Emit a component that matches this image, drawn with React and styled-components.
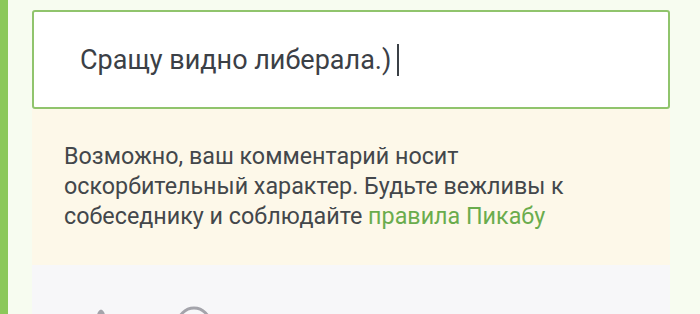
import React from 'react';
import styled, { createGlobalStyle } from 'styled-components';

const GlobalStyle = createGlobalStyle`
  html, body {
    margin: 0;
    padding: 0;
    background: #f7fcf0;
    overflow: hidden;
  }
  body {
    font-family: Roboto, "Noto Sans", sans-serif;
  }
`;

const Page = styled.div`
  display: flex;
  height: 314px;
  overflow: hidden;
  background: #f7fcf0;
`;

const SideBar = styled.div`
  width: 8px;
  flex-shrink: 0;
  background: #8bc85a;
`;

const Panel = styled.div`
  margin: 10px 0 0 24px;
  width: 638px;
  display: flex;
  flex-direction: column;
  & > * {
    flex-shrink: 0;
  }
`;

const Editor = styled.div`
  height: 95px;
  box-sizing: content-box;
  border: 2px solid #90c46c;
  border-radius: 3px;
  background: #ffffff;
  display: flex;
  align-items: center;
  padding-left: 46px;
  font-size: 27px;
  color: #3b4046;
`;

const Caret = styled.span`
  display: inline-block;
  width: 2px;
  height: 32px;
  margin-left: 6px;
  background: #3b4046;
`;

const Warning = styled.div`
  background: #fdf8e9;
  padding: 32px 32px 34px;
  font-size: 23.3px;
  line-height: 30px;
  color: #43474b;
`;

const RulesLink = styled.a`
  color: #6aac4d;
  text-decoration: none;
`;

const Toolbar = styled.div`
  height: 80px;
  background: #f7f7f9;
  display: flex;
  align-items: flex-start;
  padding: 41px 0 0 51px;
  gap: 57px;
`;

const Icon = styled.svg`
  display: block;
  flex-shrink: 0;
`;

export default function App() {
  return (
    <>
      <GlobalStyle />
      <Page>
        <SideBar />
        <Panel>
          <Editor>
            Сращу видно либерала.)
            <Caret />
          </Editor>
          <Warning>
            Возможно, ваш комментарий носит оскорбительный характер. Будьте вежливы к
            собеседнику и соблюдайте <RulesLink href="#">правила Пикабу</RulesLink>
          </Warning>
          <Toolbar>
            <Icon width="36" height="36" viewBox="0 0 36 36">
              <path d="M4 34 L15 6 Q18 1 21 6 L32 34 Z" fill="#a4a4ab" />
            </Icon>
            <Icon width="36" height="36" viewBox="0 0 36 36">
              <circle cx="18" cy="18" r="16" fill="none" stroke="#a4a4ab" strokeWidth="3" />
            </Icon>
          </Toolbar>
        </Panel>
      </Page>
    </>
  );
}
